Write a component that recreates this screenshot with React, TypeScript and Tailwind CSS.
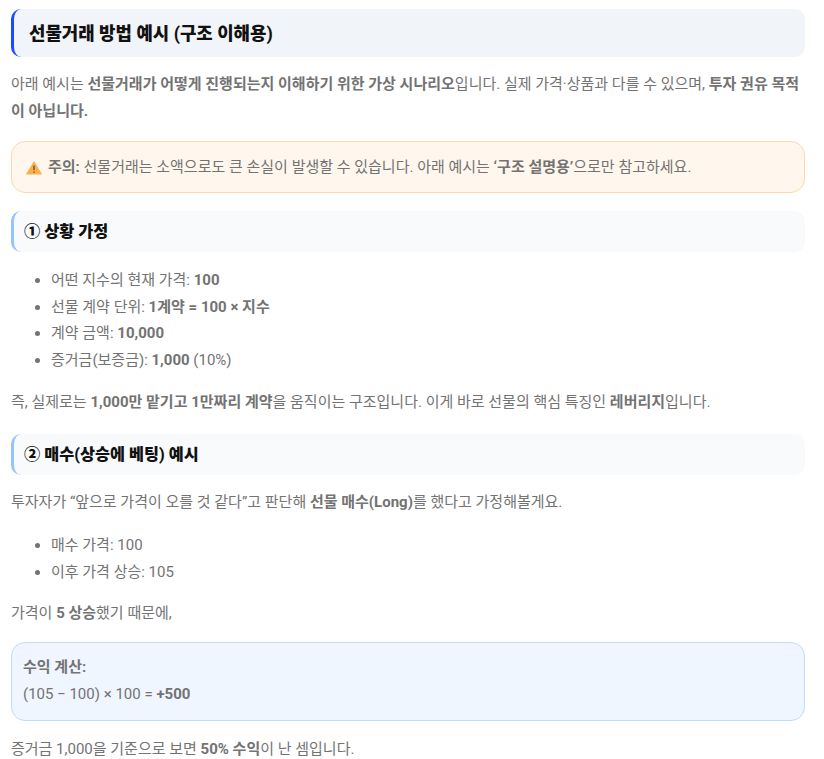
import React from "react";

const font = "font-['Roboto','Noto_Sans_CJK_KR',sans-serif]";

const Section: React.FC<{ children: React.ReactNode; className?: string }> = ({ children, className }) => (
  <h3 className={`h-[41px] flex items-center rounded-[10px] border-l-[3px] border-[#93c5fd] bg-[#f8fafc] pl-[10px] text-[16.3px] font-extrabold text-[#111] ${className ?? ""}`}>
    {children}
  </h3>
);

const Item: React.FC<{ children: React.ReactNode }> = ({ children }) => (
  <li className="h-[26.6px] leading-[26.6px]">{children}</li>
);

const App: React.FC = () => {
  return (
    <div className={`${font} h-[759px] overflow-hidden bg-white pl-[11px] pr-[19px] pt-[9px] text-[15px] leading-[27px] text-[#737373]`}>
      {/* 제목 */}
      <h2 className="h-[48px] flex items-center rounded-[10px] border-l-[3px] border-[#1a4bff] bg-[#f1f4f9] pl-[15px] text-[17.85px] font-extrabold text-[#111]">
        선물거래 방법 예시 (구조 이해용)
      </h2>

      <p className="mt-[14px]">
        아래 예시는 <b>선물거래가 어떻게 진행되는지 이해하기 위한 가상 시나리오</b>입니다. 실제 가격·상품과 다를 수 있으며, <b>투자 권유 목적이 아닙니다.</b>
      </p>

      {/* 주의 */}
      <div className="mt-[16px] h-[52px] flex items-center rounded-[14px] border border-[#fed7aa] bg-[#fff7ed] pl-[14px]">
        <svg width="16" height="14" viewBox="0 0 16 14" className="mr-[6px] shrink-0 translate-y-[1px]">
          <path d="M8 1 L15.2 13 H0.8 Z" fill="#fbb04f" stroke="#fbb04f" strokeWidth="1.2" strokeLinejoin="round" />
          <path d="M8 4.6 V9.2 M8 10.6 V11.8" stroke="#5f4a35" strokeWidth="1.3" />
        </svg>
        <span>
          <b>주의:</b> 선물거래는 소액으로도 큰 손실이 발생할 수 있습니다. 아래 예시는 <b>‘구조 설명용’</b>으로만 참고하세요.
        </span>
      </div>

      <Section className="mt-[18px]">① 상황 가정</Section>

      <ul className="mt-[15px] list-disc pl-[40px]">
        <Item>어떤 지수의 현재 가격: <b>100</b></Item>
        <Item>선물 계약 단위: <b>1계약 = 100 × 지수</b></Item>
        <Item>계약 금액: <b>10,000</b></Item>
        <Item>증거금(보증금): <b>1,000</b> (10%)</Item>
      </ul>

      <p className="mt-[16px]">
        즉, 실제로는 <b>1,000만 맡기고 1만짜리 계약</b>을 움직이는 구조입니다. 이게 바로 선물의 핵심 특징인 <b>레버리지</b>입니다.
      </p>

      <Section className="mt-[18px]">② 매수(상승에 베팅) 예시</Section>

      <p className="mt-[14px]">
        투자자가 “앞으로 가격이 오를 것 같다”고 판단해 <b>선물 매수(Long)</b>를 했다고 가정해볼게요.
      </p>

      <ul className="mt-[15.6px] list-disc pl-[40px]">
        <Item>매수 가격: 100</Item>
        <Item>이후 가격 상승: 105</Item>
      </ul>

      <p className="mt-[14.4px]">
        가격이 <b>5 상승</b>했기 때문에,
      </p>

      {/* 계산 박스 */}
      <div className="mt-[15px] h-[79px] flex flex-col justify-center rounded-[14px] border border-[#bfdbfe] bg-[#eff6ff] pl-[11px]">
        <b>수익 계산:</b>
        <span>(105 − 100) × 100 = <b>+500</b></span>
      </div>

      <p className="mt-[15px]">
        증거금 1,000을 기준으로 보면 <b>50% 수익</b>이 난 셈입니다.
      </p>
    </div>
  );
};

export default App;
